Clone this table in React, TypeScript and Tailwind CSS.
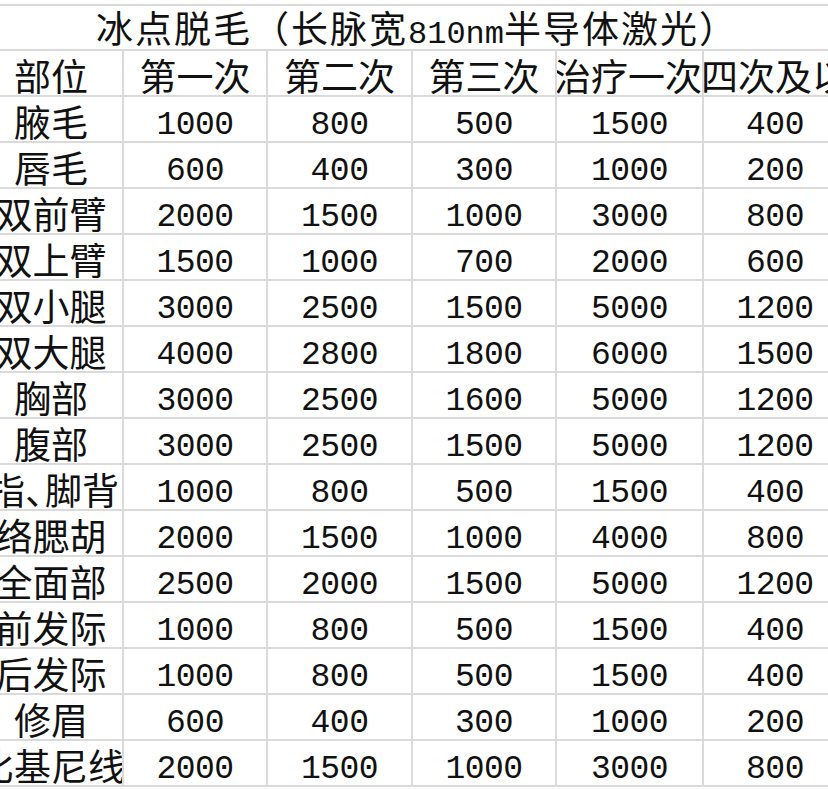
const CJK = "font-['Noto_Sans_CJK_SC','Noto_Sans_CJK_JP',sans-serif]";
const NUM = "font-['Liberation_Mono','DejaVu_Sans_Mono',monospace]";

// 列宽取自截图的网格线位置（第一列左侧和最后一列右侧被裁掉）
const COLS = 'grid-cols-[144px_144px_145px_144px_147px_144px]';

const HEADERS = ['部位', '第一次', '第二次', '第三次', '治疗一次', '第四次及以上'];

const ROWS: [string, number, number, number, number, number][] = [
  ['腋毛',     1000,  800,  500, 1500,  400],
  ['唇毛',      600,  400,  300, 1000,  200],
  ['双前臂',   2000, 1500, 1000, 3000,  800],
  ['双上臂',   1500, 1000,  700, 2000,  600],
  ['双小腿',   3000, 2500, 1500, 5000, 1200],
  ['双大腿',   4000, 2800, 1800, 6000, 1500],
  ['胸部',     3000, 2500, 1600, 5000, 1200],
  ['腹部',     3000, 2500, 1500, 5000, 1200],
  ['手指、脚背', 1000,  800,  500, 1500,  400],
  ['络腮胡',   2000, 1500, 1000, 4000,  800],
  ['全面部',   2500, 2000, 1500, 5000, 1200],
  ['前发际',   1000,  800,  500, 1500,  400],
  ['后发际',   1000,  800,  500, 1500,  400],
  ['修眉',      600,  400,  300, 1000,  200],
  ['比基尼线', 2000, 1500, 1000, 3000,  800],
];

const cell = 'h-[46px] border-r-2 border-b-2 border-[#dadada] overflow-hidden flex items-center justify-center whitespace-nowrap';
const cjkText = `${CJK} text-[37px] leading-none shrink-0 pt-[5px]`;

function PartCell({ name }: { name: string }) {
  // 超出单元格的文字被裁掉
  if (name === '手指、脚背') {
    return (
      <div className={`${cell} !justify-end pr-[3px]`}>
        <span className={cjkText}>
          手指<span className="inline-block w-[20px]">、</span>脚背
        </span>
      </div>
    );
  }
  return (
    <div className={cell}>
      <span className={cjkText}>{name}</span>
    </div>
  );
}

export default function App() {
  return (
    <div className="w-[828px] h-[789px] overflow-hidden bg-white text-[#111] pt-[4px]">
      <div className="ml-[-20px] w-[868px]">
        {/* 标题（合并单元格） */}
        <div className="h-[47px] border-t-2 border-b-2 border-[#dadada] flex items-center justify-center whitespace-nowrap">
          <span className={`${CJK} text-[37px] leading-none pt-[5px] pl-[6px] tracking-[2px]`}>
            冰点脱毛（长脉宽<span className={`${NUM} text-[32px] tracking-[0px]`}>810nm</span>半导体激光）
          </span>
        </div>

        {/* 表头 */}
        <div className={`grid ${COLS}`}>
          {HEADERS.map((h) => (
            <div key={h} className={h === '治疗一次' ? `${cell} !justify-end` : cell}>
              <span className={cjkText}>{h}</span>
            </div>
          ))}
        </div>

        {/* 数据 */}
        {ROWS.map(([name, ...prices]) => (
          <div key={name} className={`grid ${COLS}`}>
            <PartCell name={name} />
            {prices.map((p, i) => (
              <div key={i} className={cell}>
                <span className={`${NUM} text-[33px] tracking-[-0.5px] leading-none pt-[13px]`}>{p}</span>
              </div>
            ))}
          </div>
        ))}
      </div>
    </div>
  );
}
